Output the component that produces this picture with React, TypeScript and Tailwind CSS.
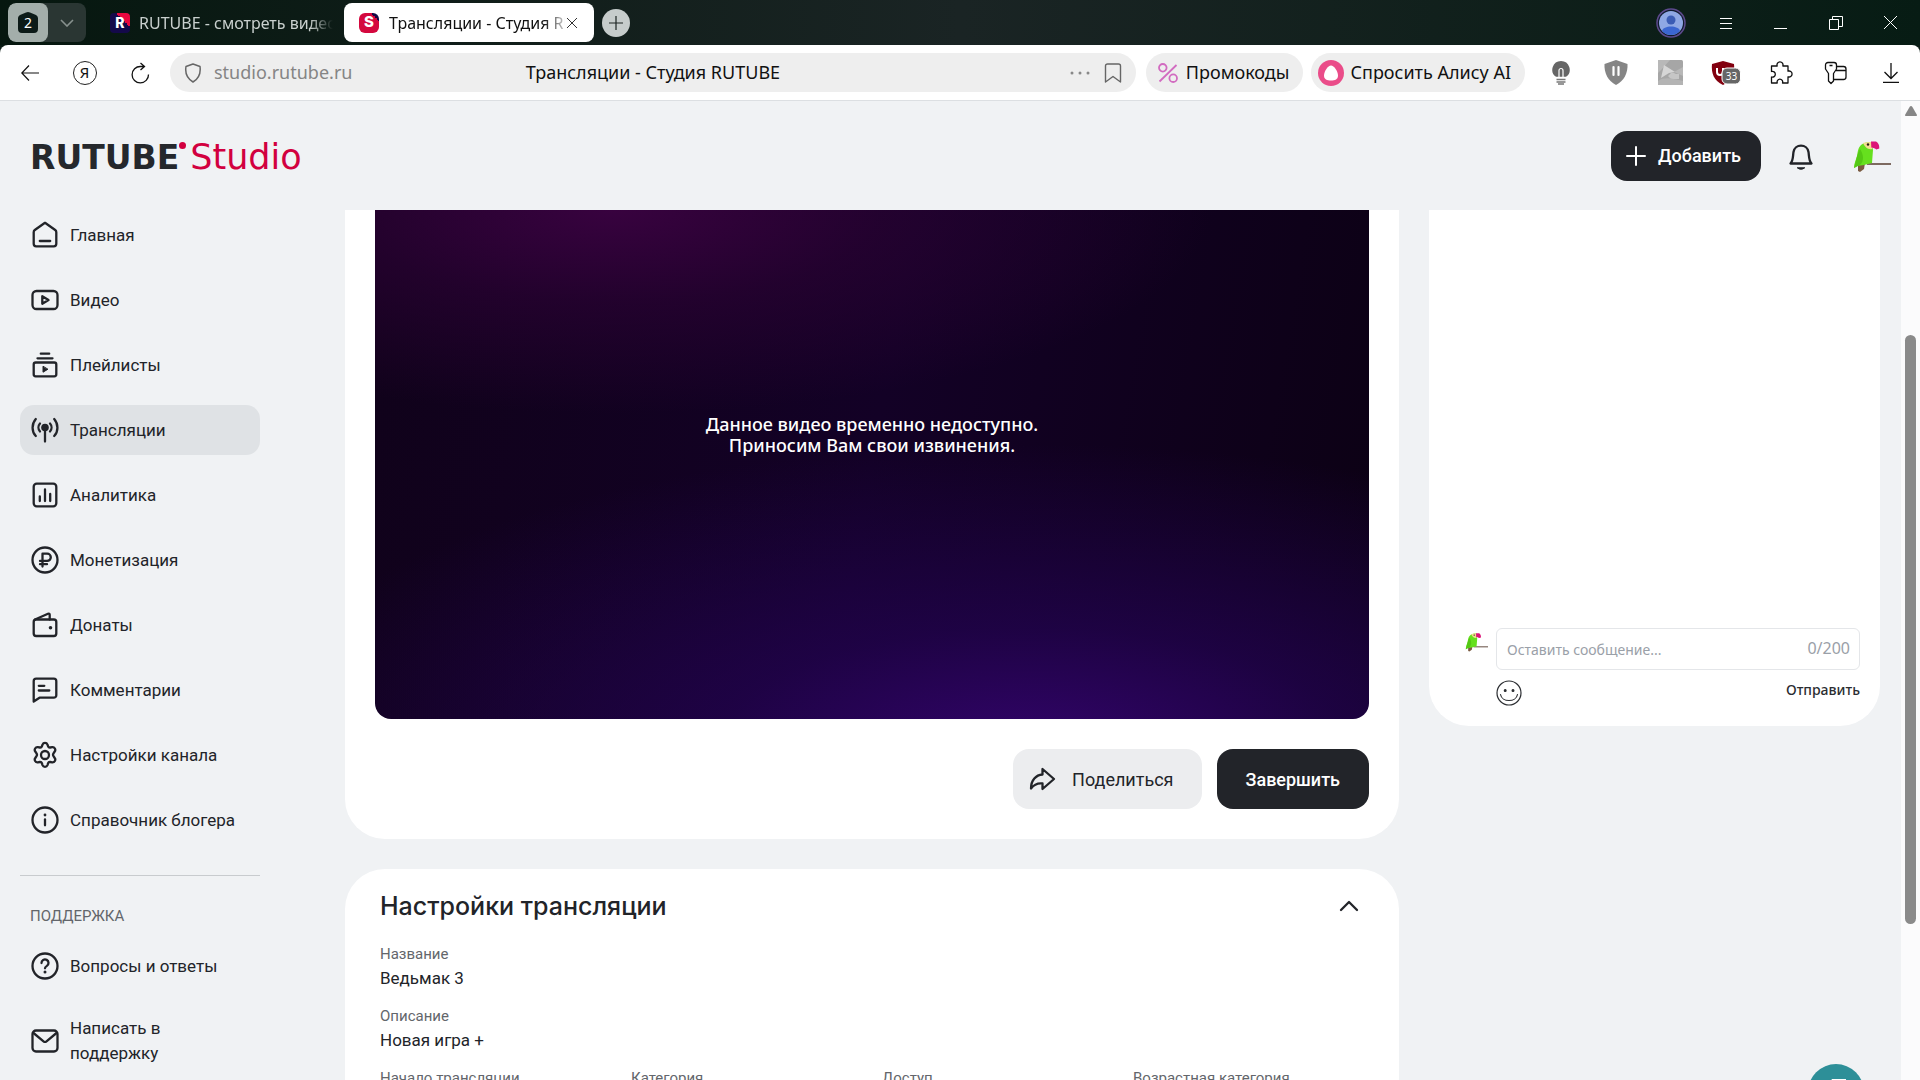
import React from "react";

type IconProps = { children: React.ReactNode; className?: string };

function Icon({ children, className = "size-[30px]" }: IconProps) {
  return (
    <svg
      viewBox="0 0 30 30"
      fill="none"
      stroke="currentColor"
      strokeWidth="2.3"
      strokeLinecap="round"
      strokeLinejoin="round"
      aria-hidden="true"
      className={`shrink-0 ${className}`}
    >
      {children}
    </svg>
  );
}

const icons = {
  home: (
    <Icon>
      <path d="M3.7 12.2c0-.9.4-1.7 1.1-2.2L15 2.8 25.2 10c.7.5 1.1 1.3 1.1 2.2v11.600a2.500 2.500 0 0 1-2.500 2.500H6.200a2.500 2.500 0 0 1-2.500-2.500Z" />
      <path d="M9.800 21h10.400" />
    </Icon>
  ),
  video: (
    <Icon>
      <rect x="2.5" y="6" width="25" height="18" rx="4" />
      <path d="M12.3 11.200v7.600l6.200-3.800Z" />
    </Icon>
  ),
  playlists: (
    <Icon>
      <path d="M10.800 3.700h8.400M7.500 8.300h15" />
      <rect x="3.7" y="12.5" width="22.6" height="13.8" rx="2" />
      <path d="M13 16.600v5.600l4.600-2.800Z" fill="currentColor" strokeWidth="1" />
    </Icon>
  ),
  live: (
    <Icon>
      <circle cx="15" cy="12.5" r="3.8" fill="currentColor" stroke="none" />
      <path d="M15 13v13.500M10 8.500a6 6 0 0 0 0 8M20 8.500a6 6 0 0 1 0 8M5.800 4c-4.300 5-4.300 12.500 0 17M24.200 4c4.300 5 4.300 12.500 0 17" />
    </Icon>
  ),
  analytics: (
    <Icon>
      <rect x="3.7" y="3.7" width="22.6" height="22.6" rx="3" />
      <path d="M9.800 16.500V21M15 9.500V21M20.200 14V21" />
    </Icon>
  ),
  money: (
    <Icon>
      <circle cx="15" cy="15" r="12.5" />
      <path d="M12.500 21.500V8.700h4.700a3.600 3.600 0 0 1 0 7.200H10M10 19.200h7" />
    </Icon>
  ),
  donate: (
    <Icon>
      <rect x="3.7" y="9.5" width="22.6" height="16.5" rx="2.5" />
      <path d="M5 9.500 18 3.800c.9-.4 1.700.1 1.700 1V9.500" />
      <circle cx="20.5" cy="17.8" r="1.8" fill="currentColor" stroke="none" />
    </Icon>
  ),
  comments: (
    <Icon>
      <path d="M3.700 26.500V6.200a2.500 2.500 0 0 1 2.500-2.500h17.600a2.500 2.500 0 0 1 2.500 2.500v14a2.500 2.500 0 0 1-2.500 2.500H9.500Z" />
      <path d="M8.800 10.800h5.500M8.800 15.500h10.500" />
    </Icon>
  ),
  settings: (
    <Icon>
      <path d="M12.500 4.600a2.700 2.700 0 0 1 5 0l.6 1.700c.3.900 1.200 1.300 2.100 1.200l2-.3a2.700 2.700 0 0 1 2.500 4.300l-1.200 1.800c-.6.900-.6 2 0 2.900l1.200 1.800a2.700 2.700 0 0 1-2.500 4.300l-2-.3c-.9-.1-1.800.3-2.100 1.200l-.6 1.900a2.700 2.700 0 0 1-5 0l-.6-1.900c-.3-.9-1.200-1.300-2.100-1.200l-2 .3a2.700 2.700 0 0 1-2.500-4.300l1.200-1.800c.6-.9.600-2 0-2.900l-1.200-1.800a2.700 2.700 0 0 1 2.500-4.300l2 .3c.9.100 1.800-.3 2.100-1.200Z" />
      <circle cx="15" cy="15" r="4" />
    </Icon>
  ),
  info: (
    <Icon>
      <circle cx="15" cy="15" r="12.5" />
      <path d="M15 14.500v5.800" />
      <circle cx="15" cy="10" r="1.4" fill="currentColor" stroke="none" />
    </Icon>
  ),
  help: (
    <Icon>
      <circle cx="15" cy="15" r="12.5" />
      <path d="M11.500 12a3.500 3.500 0 1 1 5.400 2.900c-1.200.8-1.900 1.300-1.900 2.400" />
      <circle cx="15" cy="21" r="1.5" fill="currentColor" stroke="none" />
    </Icon>
  ),
  mail: (
    <Icon>
      <rect x="2.5" y="4.5" width="25" height="21" rx="3.5" />
      <path d="m3.500 7 10 8.300c.9.700 2.100.7 3 0l10-8.300" />
    </Icon>
  ),
};

const menu = [
  { label: "Главная", icon: icons.home },
  { label: "Видео", icon: icons.video },
  { label: "Плейлисты", icon: icons.playlists },
  { label: "Трансляции", icon: icons.live, active: true },
  { label: "Аналитика", icon: icons.analytics },
  { label: "Монетизация", icon: icons.money },
  { label: "Донаты", icon: icons.donate },
  { label: "Комментарии", icon: icons.comments },
  { label: "Настройки канала", icon: icons.settings },
  { label: "Справочник блогера", icon: icons.info },
];

const support = [
  { label: "Вопросы и ответы", icon: icons.help },
  { label: "Написать в поддержку", icon: icons.mail },
];

function Parrot({ className }: { className: string }) {
  return (
    <svg viewBox="0 0 40 40" className={`shrink-0 ${className}`} aria-hidden="true">
      <path d="M16 27h24v2H16Z" fill="#7d6a60" />
      <path d="m7 28 7-1-1 6-4 3-2-1Z" fill="#7a5a40" />
      <path d="M10 9c2-2 6-3 10-3l2 8-1 13-8 2-7 1-3 2c0-5 2-8 3-12 1-5 1-8 4-11Z" fill="#66e01e" />
      <path d="M9 13c-3 5-4 12-6 19l6-3c4-4 4-10 0-16Z" fill="#54c814" />
      <path d="M12 7c3-1 6-1 9-1v7c-4 1-7-2-9-6Z" fill="#f2dc90" />
      <circle cx="17" cy="8.500" r="1.200" fill="#2a1b12" />
      <path d="M20 5.500h5c2 1 3.500 3 3.300 7l-3 1c-1-1-3-2-5-2Z" fill="#dc1478" />
    </svg>
  );
}

function Tabs() {
  return (
    <div className="flex h-[45px] shrink-0 items-center bg-linear-to-r from-[#06170f] via-[#1a2424] to-[#071c14] pr-0.5 pl-2">
      <div className="flex h-[39px] overflow-hidden rounded-lg bg-[#2a3633]">
        <button aria-label="Группа вкладок" className="relative flex w-10 items-center justify-center rounded-lg bg-[#a3aeaa]">
          <svg viewBox="0 0 22 24" className="h-6 w-[22px]" aria-hidden="true">
            <path d="M3 4 9 1.500a5 5 0 0 1 4 0L19 4a4 4 0 0 1 2 3v11a4 4 0 0 1-4 4H5a4 4 0 0 1-4-4V7a4 4 0 0 1 2-3Z" fill="#0c1a17" />
          </svg>
          <span className="absolute text-sm text-white">2</span>
        </button>
        <button aria-label="Список вкладок" className="flex w-[38px] items-center justify-center text-[#87918e]">
          <svg viewBox="0 0 14 8" className="h-2 w-3.5" fill="none" stroke="currentColor" strokeWidth="1.6" aria-hidden="true">
            <path d="m1 1 6 6 6-6" />
          </svg>
        </button>
      </div>
      <button className="ml-6 flex h-[39px] w-[234px] items-center gap-[9px] text-[#c9d0ce]">
        <span className="flex size-5 shrink-0 items-center justify-center rounded bg-linear-to-bl from-[#e8073f] from-35% to-[#14094a] to-35% font-[Inter] text-sm font-extrabold text-white">R</span>
        <span className="w-[194px] overflow-hidden text-left whitespace-nowrap [mask-image:linear-gradient(to_right,black_88%,transparent_100%)]">
          RUTUBE - смотреть видео
        </span>
      </button>
      <div className="flex h-[39px] w-[250px] items-center rounded-lg bg-white px-[15px] text-[#111]">
        <button className="flex items-center gap-2.5">
          <span className="flex size-5 shrink-0 items-center justify-center rounded-md bg-linear-to-bl from-[#140a45] from-20% to-[#d4083e] to-20% font-[Inter] text-[15px] font-extrabold text-white">S</span>
          <span className="w-[176px] overflow-hidden text-left whitespace-nowrap [mask-image:linear-gradient(to_right,black_88%,transparent_103%)]">
            Трансляции - Студия RUTUBE
          </span>
        </button>
        <button aria-label="Закрыть вкладку" className="flex size-4 items-center justify-center text-[#333]">
          <svg viewBox="0 0 10 10" className="size-2.5" stroke="currentColor" aria-hidden="true">
            <path d="m0 0 10 10M10 0 0 10" />
          </svg>
        </button>
      </div>
      <button aria-label="Новая вкладка" className="ml-2 flex size-7 items-center justify-center rounded-full bg-[#c6cccb] text-[#1c2422]">
        <svg viewBox="0 0 14 14" className="size-3.5" stroke="currentColor" strokeWidth="1.2" aria-hidden="true">
          <path d="M7 0v14M0 7h14" />
        </svg>
      </button>
      <div className="ml-auto flex items-center text-white">
        <button aria-label="Профиль" className="flex w-[55px] justify-center">
          <svg viewBox="0 0 30 30" className="size-[30px]" aria-hidden="true">
            <circle cx="15" cy="15" r="14" fill="#101a2e" stroke="#5c4a8c" strokeWidth="1.5" />
            <circle cx="15" cy="15" r="12" fill="#8fa8e4" />
            <circle cx="15" cy="12" r="4.5" fill="#3b5cb4" />
            <path d="M6 23c1-6 17-6 18 0a12 12 0 0 1-18 0Z" fill="#3b66d0" />
          </svg>
        </button>
        <button aria-label="Меню" className="flex w-[55px] justify-center">
          <svg viewBox="0 0 12 12" className="size-3" stroke="currentColor" aria-hidden="true">
            <path d="M0 1.500h12M0 6.500h12M0 11.500h12" />
          </svg>
        </button>
        <button aria-label="Свернуть" className="flex w-[55px] justify-center">
          <svg viewBox="0 0 13 13" className="size-[13px]" stroke="currentColor" aria-hidden="true">
            <path d="M0 12.500h13" />
          </svg>
        </button>
        <button aria-label="Восстановить" className="flex w-[55px] justify-center">
          <svg viewBox="0 0 14 14" className="size-3.5" fill="none" stroke="currentColor" aria-hidden="true">
            <path d="M.5 3.500h9v10h-9ZM3.500 3.500v-3h10v10h-4" />
          </svg>
        </button>
        <button aria-label="Закрыть" className="flex w-[55px] justify-center">
          <svg viewBox="0 0 13 13" className="size-[13px]" stroke="currentColor" aria-hidden="true">
            <path d="m0 0 13 13M13 0 0 13" />
          </svg>
        </button>
      </div>
    </div>
  );
}

const toolButton = "flex w-[55px] items-center justify-center";

function Toolbar() {
  return (
    <div className="flex h-14 shrink-0 items-center rounded-t-lg border-b border-[#dcdfe2] bg-white text-[18px] text-[#111]">
      <button aria-label="Назад" className="ml-0.5 flex w-[55px] justify-center">
        <svg viewBox="0 0 18 16" className="h-4 w-[18px]" fill="none" stroke="currentColor" strokeWidth="1.2" aria-hidden="true">
          <path d="M18 8H1M8 .5.800 8 8 15.500" />
        </svg>
      </button>
      <button aria-label="Яндекс" className={toolButton}>
        <span className="flex size-6 items-center justify-center rounded-full border border-[#222] text-[15px]">Я</span>
      </button>
      <button aria-label="Обновить" className={toolButton}>
        <svg viewBox="0 0 20 22" className="h-[22px] w-5" fill="none" stroke="currentColor" strokeWidth="1.3" aria-hidden="true">
          <path d="M18.500 12.500A8.200 8.200 0 1 1 10.500 4.500H14M10.500 1 14.500 4.500 10.500 8" />
        </svg>
      </button>
      <div className="ml-[3px] flex h-[39px] min-w-0 flex-1 items-center rounded-full bg-[#eeeeee] px-[14px]">
        <div className="flex flex-1 items-center gap-3">
          <button aria-label="Защита" className="text-[#666]">
            <svg viewBox="0 0 18 20" className="h-5 w-[18px]" fill="none" stroke="currentColor" strokeWidth="1.5" strokeLinejoin="round" aria-hidden="true">
              <path d="m9 1 7 2.500c.8 6-1 12-7 15.500C3 15.500 1 9.500 2 3.500Z" />
            </svg>
          </button>
          <button className="text-[#858585]">studio.rutube.ru</button>
        </div>
        <h1 className="whitespace-nowrap">Трансляции - Студия RUTUBE</h1>
        <div className="flex flex-1 items-center justify-end gap-3.5">
          <button aria-label="Ещё" className="text-[#888]">
            <svg viewBox="0 0 20 4" className="h-1 w-5" fill="currentColor" aria-hidden="true">
              <circle cx="2" cy="2" r="1.5" />
              <circle cx="10" cy="2" r="1.5" />
              <circle cx="18" cy="2" r="1.5" />
            </svg>
          </button>
          <button aria-label="Закладка" className="text-[#666]">
            <svg viewBox="0 0 18 20" className="h-5 w-[18px]" fill="none" stroke="currentColor" strokeWidth="1.4" strokeLinejoin="round" aria-hidden="true">
              <path d="M1.500 19V3a2 2 0 0 1 2-2h11a2 2 0 0 1 2 2v16L9 13.500Z" />
            </svg>
          </button>
        </div>
      </div>
      <button className="ml-2.5 flex h-[39px] items-center gap-2 rounded-full bg-[#eeeeee] pr-3.5 pl-3 whitespace-nowrap">
        <svg viewBox="0 0 20 20" className="size-5" fill="none" stroke="#d26bc0" strokeWidth="1.8" aria-hidden="true">
          <circle cx="4.8" cy="4.8" r="3.8" />
          <circle cx="15.2" cy="15.2" r="3.8" />
          <path d="M18.500 2 1.500 18.500" />
        </svg>
        Промокоды
      </button>
      <button className="ml-2 flex h-[39px] items-center gap-1.5 rounded-full bg-[#eeeeee] pr-3.5 pl-[7px] whitespace-nowrap">
        <svg viewBox="0 0 26 26" className="size-[26px]" aria-hidden="true">
          <circle cx="13" cy="13" r="13" fill="#ea4c89" />
          <path d="M13 5.500c3 0 7 6 7 10s-3 5-7 5-7-1-7-5 4-10 7-10Z" fill="#fff" />
        </svg>
        Спросить Алису AI
      </button>
      <div className="ml-2 flex shrink-0 pr-0.5">
        <button aria-label="Подсказки" className={toolButton}>
          <svg viewBox="0 0 18 24" className="h-6 w-[18px]" aria-hidden="true">
            <path d="M9 0a8.700 8.700 0 0 1 5 15.800H4A8.700 8.700 0 0 1 9 0Z" fill="#666" />
            <path d="M7 16V9.500a2 2 0 0 1 4 0V16" fill="none" stroke="#fff" strokeWidth="1.2" />
            <path d="M4.500 18.500h9M4.500 21h9M6 23h6" stroke="#777" strokeWidth="1.3" />
          </svg>
        </button>
        <button aria-label="Щит" className={toolButton}>
          <svg viewBox="0 0 24 25" className="h-[25px] w-6" aria-hidden="true">
            <path d="m12 0 11.500 4C24 13 20 21 12 25 4 21 0 13 .5 4Z" fill="#858585" />
            <path d="M9.500 7v8M14.500 7v8" stroke="#fff" strokeWidth="2.2" strokeLinecap="round" />
          </svg>
        </button>
        <button aria-label="Видео" className={toolButton}>
          <svg viewBox="0 0 25 25" className="size-[25px]" aria-hidden="true">
            <rect width="25" height="25" rx="1.5" fill="#a6a6a6" />
            <path d="M0 0h12L3 10 0 13ZM16 12l9-5v9Z" fill="#b8b8b8" />
            <path d="m6 5 11 7-6 1-8 5Z" fill="#d6d6d6" />
            <path d="M13 13h3l2 1h3v5h-8l-3-3Z" fill="#c6c6c6" />
            <path d="M0 21c7-5 16-2 25 0v4H0Z" fill="#b4b4b4" />
          </svg>
        </button>
        <button aria-label="Блокировщик" className={toolButton}>
          <svg viewBox="0 0 30 26" className="h-[26px] w-[30px]" aria-hidden="true">
            <path d="m12 1 11 3c1 9-2 17-11 21C3 21 0 13 1 4Z" fill="#82000f" />
            <path d="M6 8v4a3 3 0 0 0 6 0V8" fill="none" stroke="#fff" strokeWidth="2" />
            <rect x="11" y="8" width="18.5" height="16" rx="5" fill="#666" stroke="#fff" />
            <text x="20.5" y="19.8" textAnchor="middle" fontSize="10" fontFamily="Noto Sans" fill="#fff">33</text>
          </svg>
        </button>
        <button aria-label="Расширения" className={toolButton}>
          <svg viewBox="0 0 24 24" className="size-6" fill="none" stroke="currentColor" strokeWidth="1.3" strokeLinejoin="round" aria-hidden="true">
            <path d="M2.500 5h5.700a3 3 0 1 1 5.600 0H19v5.200a3 3 0 1 1 0 5.600V22h-5.500a2.800 2.800 0 1 0-5.200 0H2.500v-6a2.900 2.900 0 1 0 0-5.500Z" />
          </svg>
        </button>
        <button aria-label="Пароли" className={toolButton}>
          <svg viewBox="0 0 24 24" className="size-6" fill="none" stroke="currentColor" strokeWidth="1.3" strokeLinejoin="round" aria-hidden="true">
            <path d="M4 1.500h6A2.500 2.500 0 0 1 12.500 4v4L9.500 12.500V20L7 22.500 4.500 20v-7.500L1.500 8V4A2.500 2.500 0 0 1 4 1.500ZM5.500 4.500h3" />
            <path d="M12.500 5.500h7A2.500 2.500 0 0 1 22 8v8a2.500 2.500 0 0 1-2.500 2.500h-10M12 9.500h10" />
          </svg>
        </button>
        <button aria-label="Загрузки" className={toolButton}>
          <svg viewBox="0 0 16 20" className="h-5 w-4" fill="none" stroke="currentColor" strokeWidth="1.3" aria-hidden="true">
            <path d="M8 0v15M1.500 9 8 15.500 14.500 9M0 19.300h16" />
          </svg>
        </button>
      </div>
    </div>
  );
}

function Header() {
  return (
    <header className="flex h-[109px] shrink-0 items-center pr-2.5 pl-[30px]">
      <a href="#" aria-label="RUTUBE Studio" className="flex items-baseline pt-1 font-['DejaVu_Sans']">
        <span className="text-[33px] leading-9 font-bold text-[#25282c]">RUTUBE</span>
        <span className="size-[7px] -translate-y-5 rounded-full bg-[#d2003f]" />
        <span className="ml-1 text-[35px] leading-9 text-[#d2003f]">Studio</span>
      </a>
      <button className="ml-auto flex h-[50px] items-center gap-3 rounded-2xl bg-[#222429] pr-5 pl-[15px] text-[18px] font-medium text-white">
        <svg viewBox="0 0 20 20" className="size-5" stroke="currentColor" strokeWidth="2" strokeLinecap="round" aria-hidden="true">
          <path d="M10 1v18M1 10h18" />
        </svg>
        Добавить
      </button>
      <button aria-label="Уведомления" className="ml-[25px] text-[#222429]">
        <Icon>
          <path d="M4.500 22.500c2.800-3 2.300-7 3-11.500a7.600 7.600 0 0 1 15 0c.7 4.500.2 8.500 3 11.500Z" />
          <path d="M11.500 27c1.800 1.700 5.200 1.700 7 0Z" fill="currentColor" strokeWidth="1" />
        </Icon>
      </button>
      <button aria-label="Канал" className="ml-[35px]">
        <Parrot className="size-10" />
      </button>
    </header>
  );
}

const navLink = "flex min-h-[50px] items-center gap-2.5 rounded-[14px] px-2.5 py-2.5 text-[17px] leading-[25px]";

function Sidebar() {
  return (
    <nav className="flex w-60 shrink-0 flex-col gap-[15px]">
      {menu.map((item) => (
        <a key={item.label} href="#" className={item.active ? `${navLink} bg-[#dfe2e5]` : navLink}>
          {item.icon}
          {item.label}
        </a>
      ))}
      <hr className="mt-[15px] border-[#c8cbce]" />
      <h2 className="mt-[15px] px-2.5 text-[15px] leading-5 text-[#63666b]">ПОДДЕРЖКА</h2>
      {support.map((item) => (
        <a key={item.label} href="#" className={navLink}>
          {item.icon}
          <span className="w-40">{item.label}</span>
        </a>
      ))}
    </nav>
  );
}

function Field({ label, value }: { label: string; value: string }) {
  return (
    <div>
      <dt className="text-[15px] leading-5 text-[#63666b]">{label}</dt>
      <dd className="mt-0.5 text-[17px] leading-6">{value}</dd>
    </div>
  );
}

const playerBackground =
  "bg-[radial-gradient(ellipse_60%_40%_at_24%_0%,#38023f_0%,#2a0233b0_45%,transparent_100%),radial-gradient(ellipse_80%_60%_at_66%_106%,#32046a_0%,#22034fc0_40%,transparent_100%),linear-gradient(100deg,#10021a,#130126_50%,#0c0114)]";

function Broadcast() {
  return (
    <main className="flex min-w-0 flex-1 flex-col gap-[30px]">
      <section className="rounded-b-[40px] bg-white p-[30px] pt-0">
        <div
          className={`flex aspect-[994/509] items-center justify-center rounded-b-2xl pb-15 text-center font-['Noto_Sans'] text-[18px] leading-[21px] font-medium text-white ${playerBackground}`}
        >
          <p>
            Данное видео временно недоступно.
            <br />
            Приносим Вам свои извинения.
          </p>
        </div>
        <div className="mt-[30px] flex justify-end gap-[15px] text-[18px]">
          <button className="flex h-[60px] items-center gap-3.5 rounded-2xl bg-[#ecedef] pr-7 pl-[15px]">
            <Icon>
              <path d="M14.500 5v5.500C8 11 3 16 3 24.500c3-4 7-5.500 11.500-5v5.500L26 15Z" />
            </Icon>
            Поделиться
          </button>
          <button className="h-[60px] rounded-2xl bg-[#222429] px-[29px] font-medium text-white">Завершить</button>
        </div>
      </section>
      <section className="rounded-t-[40px] bg-white pt-[22px] pr-[30px] pl-[35px]">
        <div className="flex items-center justify-between pr-[5px]">
          <h2 className="font-[Inter] text-[25px] leading-[30px] font-medium">Настройки трансляции</h2>
          <button aria-label="Свернуть настройки">
            <Icon>
              <path d="m7 19 8-8 8 8" />
            </Icon>
          </button>
        </div>
        <dl className="mt-[23px] grid gap-4">
          <Field label="Название" value="Ведьмак 3" />
          <Field label="Описание" value="Новая игра +" />
          <div className="grid grid-cols-4 gap-[15px]">
            <Field label="Начало трансляции" value="Сейчас" />
            <Field label="Категория" value="Видеоигры" />
            <Field label="Доступ" value="Открытый" />
            <Field label="Возрастная категория" value="18+" />
          </div>
        </dl>
      </section>
    </main>
  );
}

function Chat() {
  return (
    <aside className="flex aspect-[451/516] w-[451px] shrink-0 flex-col justify-end self-start rounded-b-[40px] bg-white pr-5 pb-5 pl-[35px] font-['Noto_Sans']">
      <div className="flex gap-2">
        <Parrot className="mt-0.5 size-6" />
        <div className="flex-1">
          <div className="relative">
            <input
              type="text"
              aria-label="Сообщение"
              placeholder="Оставить сообщение..."
              className="h-[42px] w-full rounded-md border border-[#e4e6e9] pr-16 pl-2.5 text-sm placeholder:text-[#9aa0a8]"
            />
            <span className="absolute top-2 right-2.5 text-base text-[#9aa0a8]">0/200</span>
          </div>
          <div className="mt-2.5 flex items-start justify-between">
            <button aria-label="Смайлы">
              <svg viewBox="0 0 26 26" className="size-[26px]" fill="none" stroke="#2b2d31" strokeWidth="1.2" strokeLinecap="round" aria-hidden="true">
                <circle cx="13" cy="13" r="12" />
                <path d="M4.500 14.500c1.500 8 15.500 8 17 0" />
                <circle cx="9.2" cy="10.5" r=".9" fill="#2b2d31" />
                <circle cx="17" cy="10.5" r=".9" fill="#2b2d31" />
              </svg>
            </button>
            <button className="text-sm leading-5 font-medium text-[#2b2d31]">Отправить</button>
          </div>
        </div>
      </div>
    </aside>
  );
}

export default function App() {
  return (
    <div className="flex h-screen flex-col overflow-hidden bg-[#0b1c16] font-['Noto_Sans'] text-[16px]">
      <Tabs />
      <Toolbar />
      <div className="flex min-h-0 flex-1">
        <div className="relative flex min-w-0 flex-1 flex-col overflow-hidden bg-[#f0f2f4] font-[Roboto] text-[#222429]">
          <Header />
          <div className="flex pr-[21px] pl-5">
            <Sidebar />
            <div className="ml-[85px] flex min-w-0 flex-1 gap-[30px]">
              <Broadcast />
              <Chat />
            </div>
          </div>
          <button aria-label="Чат поддержки" className="absolute right-[37px] -bottom-10 flex size-14 items-start justify-center rounded-full bg-[#2d8f98] pt-[15px] text-white">
            <svg viewBox="0 0 26 26" className="size-[26px]" fill="currentColor" aria-hidden="true">
              <path d="M9 0h14v14h-5l-4 4v-4H6V5Z" />
            </svg>
          </button>
        </div>
        <div className="flex w-[19px] shrink-0 flex-col items-center bg-[#fbfbfc] pt-[5px]">
          <svg viewBox="0 0 12 10" className="h-2.5 w-3" fill="#868686" aria-hidden="true">
            <path d="M6 0c.6 0 1 .4 1.400 1L12 9c0 .6-.4 1-1 1H1C.4 10 0 9.600 0 9l4.600-8C5 .4 5.400 0 6 0Z" />
          </svg>
          <div className="mt-[219px] h-[589px] w-[11px] rounded-full bg-[#8a8a8a]" />
        </div>
      </div>
    </div>
  );
}
